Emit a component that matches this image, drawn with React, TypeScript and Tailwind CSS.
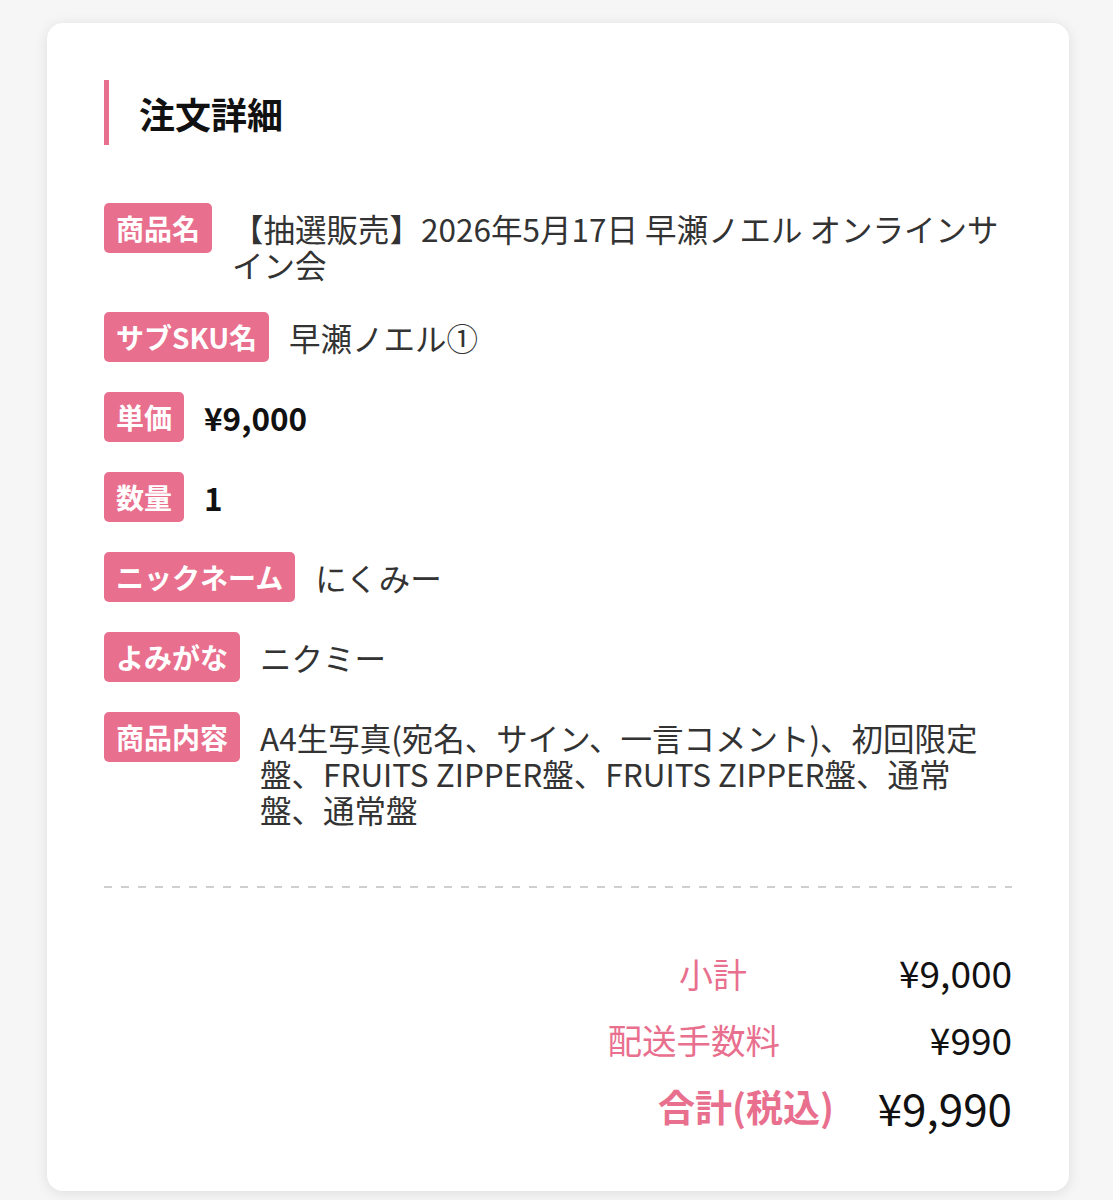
import React from 'react';

const PINK = 'bg-[#e96f8e]';

type Row = {
  label: string;
  value: string;
  strong?: boolean;
};

const rows: Row[] = [
  { label: '商品名', value: '【抽選販売】2026年5月17日 早瀬ノエル オンラインサイン会' },
  { label: 'サブSKU名', value: '早瀬ノエル①' },
  { label: '単価', value: '¥9,000', strong: true },
  { label: '数量', value: '1', strong: true },
  { label: 'ニックネーム', value: 'にくみー' },
  { label: 'よみがな', value: 'ニクミー' },
  {
    label: '商品内容',
    value: 'A4生写真(宛名、サイン、一言コメント)、初回限定盤、FRUITS ZIPPER盤、FRUITS ZIPPER盤、通常盤、通常盤',
  },
];

function DetailRow({ label, value, strong }: Row) {
  return (
    <div className="flex items-start gap-5">
      <div
        className={`${PINK} shrink-0 h-[50px] flex items-center px-3 rounded-[5px] text-white font-bold text-[28px] leading-none`}
      >
        {label}
      </div>
      <div
        className={`pt-[7px] text-[31.5px] leading-[36px] min-w-0 ${
          strong ? 'font-bold text-[#111]' : 'text-[#333]'
        }`}
      >
        {value}
      </div>
    </div>
  );
}

export default function App() {
  return (
    <div
      className="min-h-[1200px] bg-[#f6f6f6] pt-[23px] pl-[47px]"
      style={{ fontFamily: '"Noto Sans CJK JP", "Noto Sans", sans-serif' }}
    >
      <div className="w-[1022px] bg-white rounded-[16px] shadow-[0_2px_14px_rgba(0,0,0,0.10)] px-[57px] pt-[57px] pb-[56px]">
        {/* Heading */}
        <div className="flex items-center h-[65px]">
          <div className={`${PINK} w-[5px] h-[65px]`} />
          <h2 className="ml-[30px] text-[36px] font-bold text-[#111] leading-none">注文詳細</h2>
        </div>

        {/* Detail rows */}
        <div className="mt-[58px] flex flex-col gap-[30px]">
          {rows.map((r) => (
            <DetailRow key={r.label} {...r} />
          ))}
        </div>

        {/* Divider */}
        <div className="mt-[59px] h-[2px] bg-[linear-gradient(to_right,#cfcfcf_8px,transparent_8px)] bg-[length:17px_2px]" />

        {/* Totals */}
        <div className="mt-[61px] flex flex-col">
          <div className="flex justify-end items-center h-[48px]">
            <span className="mr-[95px] text-[34px] text-[#e96f8e]">小計</span>
            <span className="w-[170px] text-right text-[37px] text-[#111]">¥9,000</span>
          </div>
          <div className="mt-[19px] flex justify-end items-center h-[48px]">
            <span className="mr-[62px] text-[34.5px] text-[#e96f8e]">配送手数料</span>
            <span className="w-[170px] text-right text-[37px] text-[#111]">¥990</span>
          </div>
          <div className="mt-[15px] flex justify-end items-center h-[56px]">
            <span className="mr-[8px] text-[37px] font-bold text-[#e96f8e]">合計(税込)</span>
            <span className="w-[170px] text-right text-[44px] text-[#111]">¥9,990</span>
          </div>
        </div>
      </div>
    </div>
  );
}
